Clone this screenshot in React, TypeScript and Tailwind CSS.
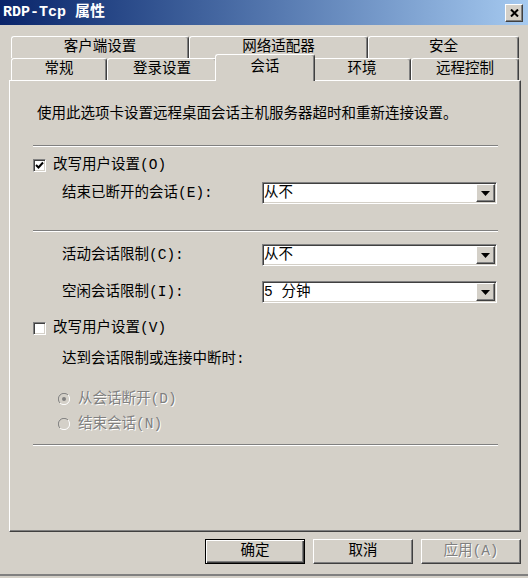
import type { ReactNode } from 'react';

// Classic Windows 2000 look: #d4d0c8 face, white highlight, #808080 / #404040 shadows
const raised =
  'border border-t-white border-l-white border-r-[#404040] border-b-[#404040] shadow-[inset_-1px_-1px_0_#808080]';
const sunken =
  'border border-t-[#808080] border-l-[#808080] border-r-white border-b-white shadow-[inset_1px_1px_0_#404040,inset_-1px_-1px_0_#d4d0c8]';
const disabledText = 'text-[#808080] [text-shadow:1px_1px_0_#ffffff]';

function Tab({ w, children }: { w: string; children: ReactNode }) {
  return (
    <div
      className={`${w} h-full shrink-0 flex items-center justify-center rounded-t-[3px] border-l border-t border-l-white border-t-white border-r border-r-[#404040] shadow-[inset_-1px_0_0_#808080]`}
    >
      {children}
    </div>
  );
}

function Separator() {
  return <div className="w-[465px] h-[2px] border-t border-t-[#808080] border-b border-b-white" />;
}

function Combo({ value }: { value: string }) {
  return (
    <div className={`w-[235px] h-[22px] bg-white ${sunken} flex items-center pl-[1px] pr-[1px]`}>
      <span className="flex-1">{value}</span>
      <div className={`w-[19px] h-[18px] bg-[#d4d0c8] ${raised} flex items-center justify-center`}>
        <svg width="9" height="5" viewBox="0 0 9 5">
          <polygon points="0,0 9,0 4.5,5" fill="#000" />
        </svg>
      </div>
    </div>
  );
}

function Checkbox({ checked }: { checked?: boolean }) {
  return (
    <div className={`w-[13px] h-[13px] bg-white ${sunken} flex items-center justify-center shrink-0`}>
      {checked && (
        <svg width="9" height="9" viewBox="0 0 9 9">
          <path d="M1 4 L3.5 6.5 L8 1.5" stroke="#000" strokeWidth="2" fill="none" />
        </svg>
      )}
    </div>
  );
}

function Radio({ checked }: { checked?: boolean }) {
  return (
    <svg width="12" height="12" viewBox="0 0 12 12" className="shrink-0">
      <circle cx="6" cy="6" r="5.5" fill="#d4d0c8" />
      <path d="M10 2 A5.5 5.5 0 0 0 2 10" stroke="#808080" strokeWidth="1" fill="none" />
      <path d="M2 10 A5.5 5.5 0 0 0 10 2" stroke="#ffffff" strokeWidth="1" fill="none" />
      {checked && <circle cx="6" cy="6" r="2" fill="#808080" />}
    </svg>
  );
}

function Button({ label, isDefault, disabled }: { label: string; isDefault?: boolean; disabled?: boolean }) {
  const frame = isDefault
    ? 'border border-black shadow-[inset_1px_1px_0_#ffffff,inset_-1px_-1px_0_#404040,inset_-2px_-2px_0_#808080]'
    : raised;
  return (
    <div className={`w-[100px] h-[25px] flex items-center justify-center ${frame} ${disabled ? disabledText : ''}`}>
      {label}
    </div>
  );
}

export default function App() {
  return (
    <div className="w-[528px] h-[578px] bg-[#d4d0c8] overflow-hidden flex flex-col font-['Liberation_Mono','Noto_Sans_CJK_SC',monospace] text-[14.5px] leading-none text-black">
      {/* Title bar */}
      <div className="h-[25px] shrink-0 bg-linear-to-r from-[#0a246a] to-[#a6caf0] flex items-center justify-between pl-[3px] pr-[5px]">
        <span className="text-white font-bold text-[15px]">RDP-Tcp 属性</span>
        <div className={`w-[18px] h-[18px] bg-[#d4d0c8] ${raised} flex items-center justify-center`}>
          <svg width="9" height="8" viewBox="0 0 9 8">
            <path d="M1 0.5 L8 7.5 M8 0.5 L1 7.5" stroke="#000" strokeWidth="2" />
          </svg>
        </div>
      </div>

      {/* Tabs, back row */}
      <div className="flex ml-[11px] mt-[11px] h-[22px]">
        <Tab w="w-[178px]">客户端设置</Tab>
        <Tab w="w-[179px]">网络适配器</Tab>
        <Tab w="w-[151px]">安全</Tab>
      </div>

      {/* Tabs, front row */}
      <div className="flex items-end ml-[11px] h-[22px]">
        <Tab w="w-[96px]">常规</Tab>
        <Tab w="w-[110px]">登录设置</Tab>
        <div className="relative z-10 w-[100px] h-[27px] -mx-[2px] -mb-[1px] shrink-0 bg-[#d4d0c8] flex items-center justify-center pb-[1px] rounded-t-[3px] border-l border-t border-l-white border-t-white border-r border-r-[#404040] shadow-[inset_-1px_0_0_#808080]">
          会话
        </div>
        <Tab w="w-[98px]">环境</Tab>
        <Tab w="w-[108px]">远程控制</Tab>
      </div>

      {/* Tab page */}
      <div className="ml-[9px] w-[512px] h-[452px] shrink-0 border-l border-t border-l-white border-t-white border-r border-b border-r-[#404040] border-b-[#404040] shadow-[inset_-1px_-1px_0_#808080] pl-[23px]">
        <div className="mt-[23px] ml-[4px] h-[20px] flex items-center">
          使用此选项卡设置远程桌面会话主机服务器超时和重新连接设置。
        </div>

        <div className="mt-[21px]">
          <Separator />
        </div>

        <div className="mt-[8px] h-[20px] flex items-center gap-[7px]">
          <Checkbox checked />
          <span>改写用户设置(O)</span>
        </div>

        <div className="mt-[7px] flex items-center">
          <span className="w-[229px] pl-[29px]">结束已断开的会话(E):</span>
          <Combo value="从不" />
        </div>

        <div className="mt-[26px]">
          <Separator />
        </div>

        <div className="mt-[12px] flex items-center">
          <span className="w-[229px] pl-[29px]">活动会话限制(C):</span>
          <Combo value="从不" />
        </div>

        <div className="mt-[15px] flex items-center">
          <span className="w-[229px] pl-[29px]">空闲会话限制(I):</span>
          <Combo value="5 分钟" />
        </div>

        <div className="mt-[15px] h-[20px] flex items-center gap-[7px]">
          <Checkbox />
          <span>改写用户设置(V)</span>
        </div>

        <div className="mt-[11px] h-[20px] flex items-center pl-[29px]">达到会话限制或连接中断时:</div>

        <div className={`mt-[20px] h-[20px] flex items-center gap-[8px] pl-[25px] ${disabledText}`}>
          <Radio checked />
          <span>从会话断开(D)</span>
        </div>
        <div className={`mt-[5px] h-[20px] flex items-center gap-[8px] pl-[25px] ${disabledText}`}>
          <Radio />
          <span>结束会话(N)</span>
        </div>

        <div className="mt-[10px]">
          <Separator />
        </div>
      </div>

      {/* Dialog buttons */}
      <div className="mt-[7px] ml-[205px] flex gap-[8px]">
        <Button label="确定" isDefault />
        <Button label="取消" />
        <Button label="应用(A)" disabled />
      </div>

      <div className="mt-[10px] h-[2px] bg-[#808080]" />
    </div>
  );
}
